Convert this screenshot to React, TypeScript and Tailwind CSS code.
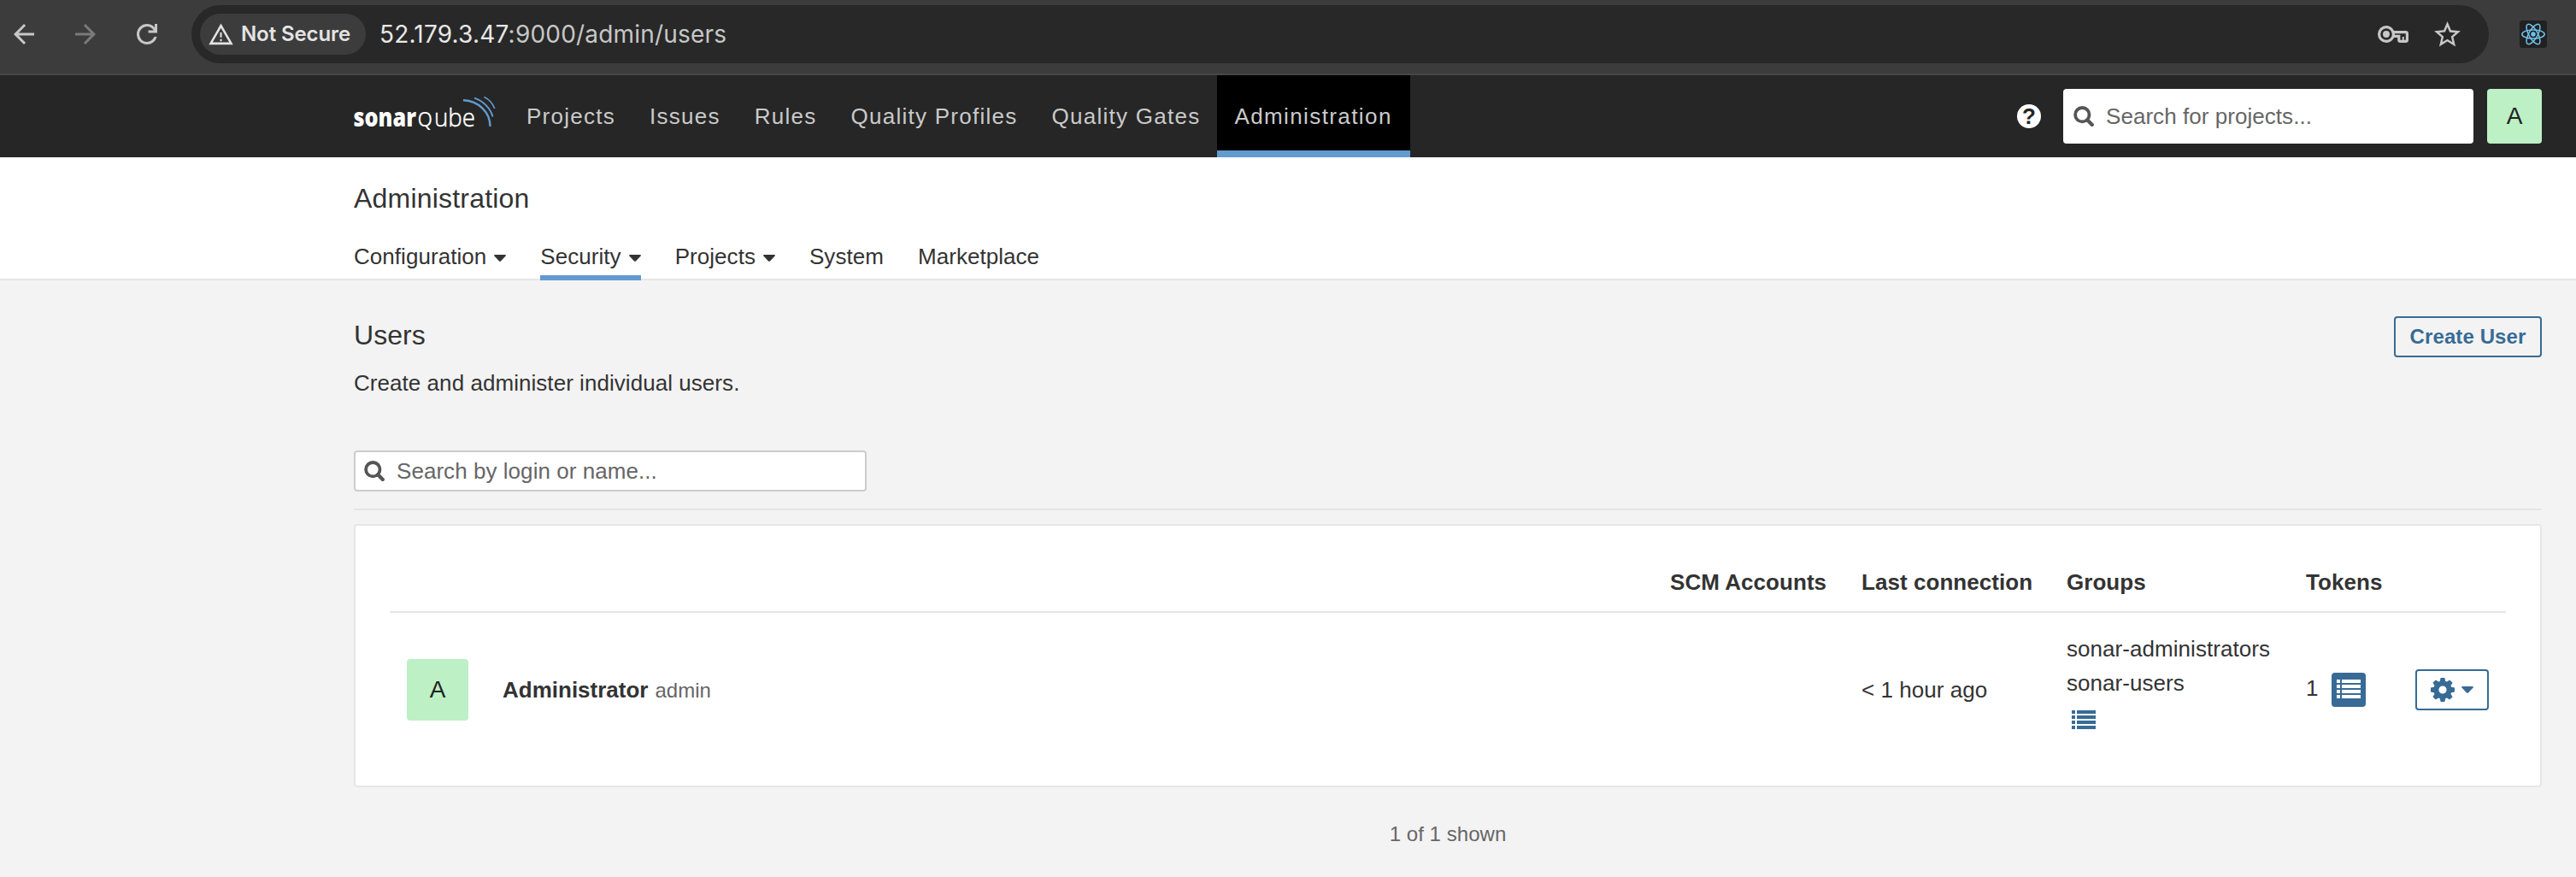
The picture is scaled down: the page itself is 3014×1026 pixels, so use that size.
import type { ReactNode } from "react";

const NAV = ["Projects", "Issues", "Rules", "Quality Profiles", "Quality Gates"];

const TABS = [
  { label: "Configuration", menu: true, active: false },
  { label: "Security", menu: true, active: true },
  { label: "Projects", menu: true, active: false },
  { label: "System", menu: false, active: false },
  { label: "Marketplace", menu: false, active: false },
];

const GROUPS = ["sonar-administrators", "sonar-users"];

function Icon({ size, d, className }: { size: string; d: string; className?: string }) {
  return (
    <svg viewBox="0 0 24 24" className={`${size} shrink-0 ${className ?? ""}`} fill="currentColor">
      <path d={d} />
    </svg>
  );
}

function Caret() {
  return (
    <svg viewBox="0 0 14 8" className="h-2 w-3.5 shrink-0" fill="currentColor">
      <path d="M1 0h12q1.4.2.6 1.4L8 7.4q-1 .9-2 0L.4 1.4Q-.4.2 1 0z" />
    </svg>
  );
}

function SearchIcon() {
  return (
    <svg viewBox="0 0 24 24" className="size-6 shrink-0 text-[#555]" fill="none" stroke="currentColor">
      <circle cx="10.3" cy="10.2" r="8.2" strokeWidth="3.8" />
      <path d="M16.2 16.2l5.6 5.8" strokeWidth="4.2" strokeLinecap="round" />
    </svg>
  );
}

function ListIcon() {
  return (
    <svg viewBox="0 0 28 22" className="h-[22px] w-7 shrink-0" fill="currentColor" shapeRendering="crispEdges">
      {[0, 6, 12, 18].map((y) => (
        <g key={y}>
          <rect x="0" y={y} width="4" height="4" />
          <rect x="6" y={y} width="22" height="4" />
        </g>
      ))}
    </svg>
  );
}

function Gear() {
  return (
    <svg viewBox="0 0 28 28" className="size-7 shrink-0" fill="none" stroke="currentColor">
      <circle cx="14" cy="14" r="7.6" strokeWidth="6" />
      {[0, 45, 90, 135, 180, 225, 270, 315].map((a) => (
        <path key={a} d="M10.6 4.8L11.6 0h4.8l1 4.800z" fill="currentColor" stroke="none" transform={`rotate(${a} 14 14)`} />
      ))}
    </svg>
  );
}

function KeyIcon() {
  return (
    <svg viewBox="0 0 36 20" className="h-5 w-9" fill="none" stroke="currentColor">
      <circle cx="10" cy="10" r="8.4" strokeWidth="3.2" />
      <circle cx="10" cy="10" r="4" fill="currentColor" stroke="none" />
      <path d="M17.5 7.6h15.2q1.7 0 1.7 1.7v7.4q0 1.7-1.7 1.7h-6.2q-1.7 0-1.7-1.7v-4.3h-7.3" strokeWidth="3.2" />
      <path d="M29.8 13v5" strokeWidth="2" />
    </svg>
  );
}

function ReactIcon() {
  return (
    <div className="flex size-8 items-center justify-center rounded-[3px] bg-[#212121]">
      <svg viewBox="-14 -14 28 28" className="size-7" fill="none" stroke="#6fc3ee" strokeWidth="1.5">
        <circle r="2.7" fill="#6fc3ee" stroke="none" />
        <ellipse rx="13.2" ry="5.1" />
        <ellipse rx="13.2" ry="5.1" transform="rotate(60)" />
        <ellipse rx="13.2" ry="5.1" transform="rotate(120)" />
      </svg>
    </div>
  );
}

function Logo() {
  return (
    <svg viewBox="0 0 166 44" className="h-11 w-[166px] shrink-0">
      <g fill="#fff" fontFamily="'Open Sans', sans-serif" letterSpacing="0">
        <text x="-0.5" y="36" fontSize="30" fontWeight="800" textLength="73.5" lengthAdjust="spacingAndGlyphs">
          sonar
        </text>
        <text x="74.5" y="36" fontSize="23" fontWeight="400" textLength="17.5" lengthAdjust="spacingAndGlyphs">
          Q
        </text>
        <text x="94" y="36" fontSize="30" fontWeight="300" stroke="#fff" strokeWidth="0.5" textLength="48" lengthAdjust="spacingAndGlyphs">
          ube
        </text>
      </g>
      <g fill="none" stroke="#619bd0">
        <path d="M128 5.2C146 6 159.500 19 159.500 36" strokeWidth="2.4" />
        <path d="M141 2.600C151 6 160 14.500 162.500 24.600" strokeWidth="2" />
        <path d="M152.500 1.400C158 4 162.500 9 164.800 15" strokeWidth="1.7" />
      </g>
    </svg>
  );
}

function Th({ children, className }: { children?: ReactNode; className: string }) {
  return <div className={`px-5 font-bold ${className}`}>{children}</div>;
}

export default function App() {
  return (
    <div className="flex h-[1026px] w-[3014px] flex-col overflow-hidden whitespace-nowrap bg-[#f3f3f3] font-['Liberation_Sans',Arial,sans-serif] text-[26px] leading-10 tracking-[0.05px] text-[#333]">
      {/* Browser toolbar */}
      <div className="flex h-[88px] shrink-0 border-b-2 border-[#474747] bg-[#3c3c3c] pt-1.5 pl-2.5 font-[Inter,sans-serif]">
        <div className="flex h-[68px] w-[214px] shrink-0 items-center gap-9 text-[#c7c7c7]">
          <Icon size="size-9" d="M20 11H7.83l5.59-5.590L12 4l-8 8 8 8 1.410-1.410L7.830 13H20z" />
          <Icon size="size-9" className="text-[#7a7a7a]" d="M4 11h12.170l-5.590-5.590L12 4l8 8-8 8-1.410-1.410L16.170 13H4z" />
          <Icon
            size="size-9"
            d="M12 20q-3.350 0-5.675-2.325T4 12t2.325-5.675T12 4q1.725 0 3.300.712T18 6.750V4h2v7h-7V9h4.200q-.8-1.400-2.187-2.200T12 6Q9.500 6 7.750 7.750T6 12t1.750 4.250T12 18q1.925 0 3.475-1.100T17.650 14h2.100q-.7 2.650-2.850 4.325T12 20"
          />
        </div>
        <div className="flex h-[68px] w-[2688px] shrink-0 items-center rounded-full bg-[#282828] pr-[30px] pl-2.5">
          <div className="flex h-12 w-[194px] items-center gap-2 rounded-full bg-[#3c3c3c] pl-[9px] text-[#e3e3e3]">
            <Icon size="size-[31px]" d="M1 21h22L12 2 1 21zm3.470-2L12 5.990 19.530 19H4.470zM11.200 16h1.600v2h-1.600zM11.200 10h1.600v4.500h-1.600z" />
            <span className="text-[24px] font-semibold tracking-[-0.1px]">Not Secure</span>
          </div>
          <span className="ml-4 text-[28px] tracking-[0.2px] text-[#c7c7c7]">
            <span className="text-[#e8e8e8]">52.179.3.47</span>:9000/admin/users
          </span>
          <div className="ml-auto flex items-center gap-[27px] text-[#c7c7c7]">
            <KeyIcon />
            <Icon
              size="size-[37px]"
              d="M22 9.240l-7.190-.62L12 2 9.190 8.630 2 9.240l5.460 4.730L5.820 21 12 17.270 18.180 21l-1.630-7.030L22 9.240zM12 15.400l-3.760 2.270 1-4.280-3.320-2.880 4.380-.38L12 6.100l1.710 4.040 4.380.38-3.320 2.880 1 4.280L12 15.400z"
            />
          </div>
        </div>
        <div className="flex h-[68px] items-center pl-9">
          <ReactIcon />
        </div>
      </div>

      {/* Global navigation */}
      <div className="flex h-24 shrink-0 items-center bg-[#262626] pr-10 pl-[414px]">
        <div className="-mt-1 mr-4">
          <Logo />
        </div>
        <nav className="flex h-full items-center tracking-[1.26px] text-[#cacaca]">
          {NAV.map((n) => (
            <span key={n} className="px-5">
              {n}
            </span>
          ))}
          <span className="flex h-full w-[226px] items-center border-b-8 border-[#619bd0] bg-black pt-2 pl-5 tracking-[1.4px]">Administration</span>
        </nav>
        <div className="ml-auto flex items-center">
          <div className="flex size-7 items-center justify-center rounded-full bg-white text-[26px] leading-7 font-bold text-[#262626]">?</div>
          <div className="ml-[26px] flex h-16 w-[480px] items-center gap-3.5 rounded bg-white pl-3 text-[#666]">
            <SearchIcon />
            <span>Search for projects...</span>
          </div>
          <div className="ml-4 flex size-16 items-center justify-center rounded bg-[#bdf0c5] text-[28px] text-[#222]">A</div>
        </div>
      </div>

      {/* Section header */}
      <div className="h-36 shrink-0 border-b-2 border-[#e6e6e6] bg-white pt-7 pl-[414px]">
        <h1 className="text-[32px] tracking-[0.2px]">Administration</h1>
        <div className="mt-5 flex gap-10 tracking-[0.05px]">
          {TABS.map((t) => (
            <span
              key={t.label}
              className={
                t.active
                  ? "flex h-14 items-center gap-[9px] border-b-6 border-[#619bd0] pt-1.5"
                  : "flex h-14 items-center gap-[9px]"
              }
            >
              {t.label}
              {t.menu && (
                <span className="pt-1">
                  <Caret />
                </span>
              )}
            </span>
          ))}
        </div>
      </div>

      {/* Users page */}
      <main className="flex flex-col pr-10 pl-[414px]">
        <div className="flex h-[199px] justify-between">
          <div className="pt-11">
            <h2 className="text-[32px]">Users</h2>
            <p className="mt-4">Create and administer individual users.</p>
          </div>
          <button className="mt-[42px] flex h-12 w-[173px] items-center justify-center rounded border-2 border-[#376b96] font-bold text-[#376b96]">
            <span className="text-[24px] tracking-[0.1px]">Create User</span>
          </button>
        </div>
        <div className="flex h-12 w-[600px] items-center gap-3.5 rounded border-2 border-[#ccc] bg-white pl-2.5 text-[#666]">
          <SearchIcon />
          <span>Search by login or name...</span>
        </div>
        <div className="mt-5 h-0.5 bg-[#e6e6e6]" />

        <section className="mt-4 h-[308px] rounded border-2 border-[#e6e6e6] bg-white px-10">
          <div className="flex h-[102px] border-b-2 border-[#e6e6e6] pt-[46px]">
            <Th className="w-[1478px]" />
            <Th className="w-56">SCM Accounts</Th>
            <Th className="w-60">Last connection</Th>
            <Th className="w-70">Groups</Th>
            <Th className="w-32">Tokens</Th>
          </div>
          <div className="flex h-[180px] items-center">
            <div className="flex w-[1702px] items-center pl-5">
              <div className="flex size-[72px] items-center justify-center rounded bg-[#bdf0c5] text-[28px] text-[#222]">A</div>
              <div className="ml-10 flex items-baseline gap-2 tracking-normal">
                <span className="font-bold">Administrator</span>
                <span className="text-[24px] text-[#666]">admin</span>
              </div>
            </div>
            <div className="w-60 px-5">&lt; 1 hour ago</div>
            <div className="h-[136px] w-70 px-5">
              {GROUPS.map((g) => (
                <div key={g}>{g}</div>
              ))}
              <div className="pt-3 pl-1.5 text-[#376b96]">
                <ListIcon />
              </div>
            </div>
            <div className="flex w-32 items-center px-5">
              <span className="-mt-1 w-[30px]">1</span>
              <div className="flex h-10 w-10 items-center justify-center rounded bg-[#376b96] pb-0.5 text-white">
                <ListIcon />
              </div>
            </div>
            <div className="ml-5 flex h-12 w-[86px] items-center gap-2 rounded border-2 border-[#376b96] pl-4 text-[#376b96]">
              <Gear />
              <Caret />
            </div>
          </div>
        </section>

        <p className="mt-[35px] text-center text-[24px] text-[#666]">1 of 1 shown</p>
      </main>
    </div>
  );
}
